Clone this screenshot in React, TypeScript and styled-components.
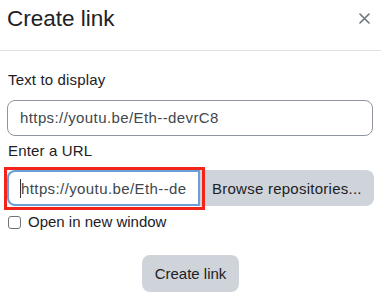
import React from "react";
import styled, { createGlobalStyle } from "styled-components";

const GlobalStyle = createGlobalStyle`
	html, body {
		margin: 0;
		padding: 0;
		background: #ffffff;
	}
	body {
		font-family: "Liberation Sans", Arial, sans-serif;
		color: #1d2125;
	}
	* {
		box-sizing: border-box;
	}
`;

const DialogSC = styled.div`
	width: 381px;
	height: 298px;
	background: #fff;
	overflow: hidden;
`;

const HeaderSC = styled.div`
	display: flex;
	align-items: center;
	justify-content: space-between;
	padding: 5px 10px 18px 7px;
	border-bottom: 1px solid #dee2e6;
`;

const TitleSC = styled.h5`
	margin: 0;
	font-size: 22.5px;
	line-height: 27px;
	font-weight: 400;
	color: #1d2125;
`;

const CloseSC = styled.button`
	display: flex;
	align-items: center;
	justify-content: center;
	width: 14px;
	height: 14px;
	padding: 0;
	border: none;
	background: none;
`;

const BodySC = styled.div`
	padding: 18px 8px 0 7px;
`;

const LabelSC = styled.label<{ $top?: number }>`
	display: block;
	margin: ${(p) => p.$top ?? 0}px 0 8px 1px;
	font-size: 15px;
	line-height: 22.5px;
	letter-spacing: 0.15px;
	color: #1d2125;
`;

const InputSC = styled.input<{ $focused?: boolean }>`
	display: block;
	width: 100%;
	height: 36px;
	padding: 0 12px;
	font-family: inherit;
	font-size: 15px;
	letter-spacing: 0.4px;
	color: #41474d;
	background: #fff;
	border: 1px solid #8f959e;
	border-radius: 8px;
	outline: none;

	${(p) =>
		p.$focused &&
		`
		border: 2px solid #6a9fd8;
		padding-left: 12px;
		border-radius: 8px 0 0 8px;
	`}
`;

const InputGroupSC = styled.div`
	display: flex;
	height: 36px;
`;

const FieldWrapSC = styled.div`
	position: relative;
	flex: 0 0 193px;
`;

const CaretSC = styled.span`
	position: absolute;
	left: 13px;
	top: 9px;
	width: 1px;
	height: 19px;
	background: #333;
`;

const HighlightSC = styled.span`
	position: absolute;
	left: -3px;
	top: -3px;
	right: -5px;
	bottom: -4px;
	border: 3px solid #f3251a;
	pointer-events: none;
`;

const BrowseSC = styled.button`
	flex: 1;
	padding: 0 12px;
	border: none;
	border-radius: 0 8px 8px 0;
	background: #ced4da;
	font-family: inherit;
	font-size: 15px;
	letter-spacing: 0.25px;
	color: #1d2125;
	text-align: left;
	white-space: nowrap;
`;

const CheckRowSC = styled.label`
	display: flex;
	align-items: center;
	gap: 7px;
	margin-top: 5px;
	padding-left: 1px;
	font-size: 15px;
	line-height: 22.5px;
	color: #1d2125;
`;

const CheckBoxSC = styled.span`
	display: inline-block;
	width: 13px;
	height: 13px;
	border: 1px solid #6f7378;
	border-radius: 3px;
	background: #fff;
`;

const FooterSC = styled.div`
	display: flex;
	justify-content: center;
	padding-top: 21px;
`;

const ButtonSC = styled.button`
	height: 37px;
	padding: 0 13px;
	border: none;
	border-radius: 8px;
	background: #ced4da;
	font-family: inherit;
	font-size: 15px;
	color: #1d2125;
`;

const url = "https://youtu.be/Eth--devrC8";

const App = () => {
	return (
		<>
			<GlobalStyle />
			<DialogSC>
				<HeaderSC>
					<TitleSC>Create link</TitleSC>
					<CloseSC aria-label="Close">
						<svg width="11" height="11" viewBox="0 0 11 11">
							<path
								d="M1 1 L10 10 M10 1 L1 10"
								stroke="#6f7479"
								strokeWidth="1.6"
								strokeLinecap="round"
							/>
						</svg>
					</CloseSC>
				</HeaderSC>
				<BodySC>
					<LabelSC>Text to display</LabelSC>
					<InputSC defaultValue={url} readOnly />
					<LabelSC $top={4}>Enter a URL</LabelSC>
					<InputGroupSC>
						<FieldWrapSC>
							<InputSC $focused defaultValue={url} readOnly />
							<CaretSC />
							<HighlightSC />
						</FieldWrapSC>
						<BrowseSC>Browse repositories...</BrowseSC>
					</InputGroupSC>
					<CheckRowSC>
						<CheckBoxSC />
						Open in new window
					</CheckRowSC>
				</BodySC>
				<FooterSC>
					<ButtonSC>Create link</ButtonSC>
				</FooterSC>
			</DialogSC>
		</>
	);
};

export default App;
